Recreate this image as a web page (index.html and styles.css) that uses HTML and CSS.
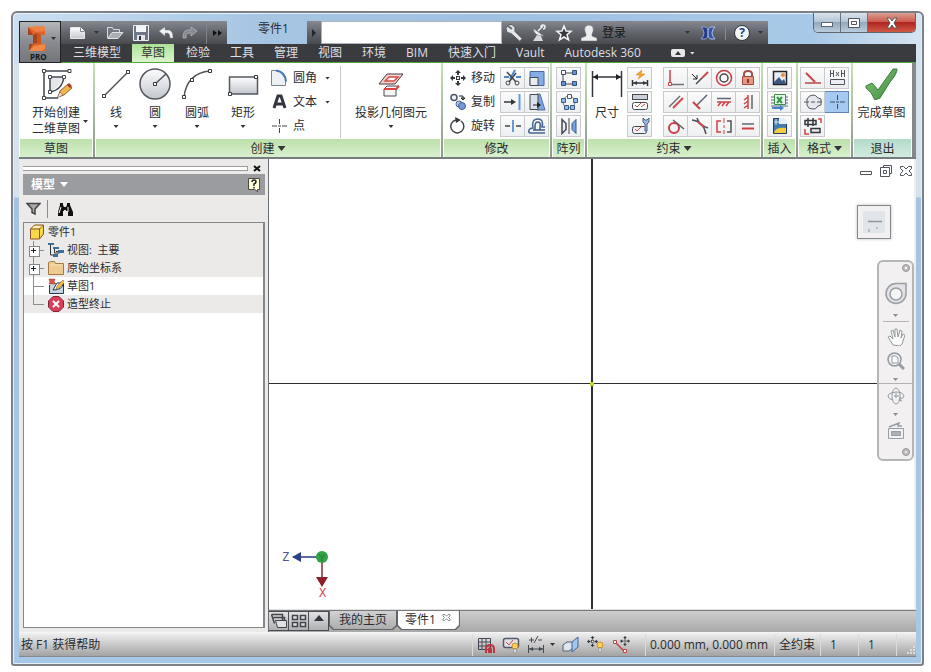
FILE: index.html
```html
<!DOCTYPE html>
<html lang="zh-CN">
<head>
<meta charset="utf-8">
<title>零件1</title>
<link rel="stylesheet" href="styles.css">
</head>
<body>
<svg class="defs" width="0" height="0" aria-hidden="true">
  <defs>
    <linearGradient id="steel" x1="0" y1="0" x2="0" y2="1"><stop offset="0" stop-color="#fdfdfe"/><stop offset="1" stop-color="#c3c7ce"/></linearGradient>
    <linearGradient id="tick" x1="0" y1="0" x2="1" y2="1"><stop offset="0" stop-color="#83c578"/><stop offset="1" stop-color="#3c8b3c"/></linearGradient>
    <symbol id="move" viewBox="0 0 16 16"><path d="M8 0l3 3H5zM8 16l3-3H5zM0 8l3-3v6zM16 8l-3-3v6zM7 3h2v2H7zM7 11h2v2H7zM3 7h2v2H3zM11 7h2v2h-2z" fill="#34363d"/><rect x="6.500" y="6.500" width="3" height="3" fill="#fff" stroke="#34363d"/></symbol>
  </defs>
</svg>
<div class="window">
  <header class="header">
    <button class="app" aria-label="应用程序菜单">
      <svg width="20" height="27" viewBox="0 0 20 27"><path d="M1 2h17v8h-4v9h4v7H2v-7h4v-9H1z" fill="#dd642c"/><path d="M1 2l5 8v9l-4 7v-7h4v-9H1zM6 10l4-2v10l-4 1z" fill="#a8421c"/><path d="M1 2l14-1 3 1v4l-9 1z" fill="#ef8243"/><path d="M10 8l4 2v9l-4-1z" fill="#c75621"/><path d="M2 26l5-5 11-2v5l-3 2z" fill="#f08848"/></svg>
      <i class="caret"></i><span>PRO</span>
    </button>
    <div class="titlebar">
      <nav class="quick">
        <button aria-label="新建"><svg width="18" height="16" viewBox="0 0 18 16"><path d="M1.500 2.500h10l4 4v7h-14z" fill="url(#steel)" stroke="#e6e7ea"/><path d="M11.500 2.500v4h4" fill="#fff" stroke="#81848b"/></svg></button>
        <i class="caret faint"></i>
        <button aria-label="打开"><svg width="18" height="16" viewBox="0 0 18 16"><path d="M1.500 13.500v-11h5l1 2h6v3" fill="#737983" stroke="#d8dbe0"/><path d="M2 13.500l4-6h11l-5 6z" fill="#a9adb5" stroke="#e1e3e7"/></svg></button>
        <button aria-label="保存"><svg width="18" height="18" viewBox="0 0 18 18"><path d="M1.500 1.500h15v15h-15z" fill="#6f7787" stroke="#eff0f2"/><path d="M4 2h10v6H4z" fill="#f4f5f7"/><path d="M5 11h8v6H5z" fill="#e3e5e9"/><path d="M7 12h2v4H7z" fill="#31343b"/></svg></button>
        <button aria-label="放弃"><svg width="16" height="14" viewBox="0 0 16 14"><path d="M1 5l6-4v3h4q4 1 4 8h-3q0-5-3-5H7v3z" fill="#f1f2f4" stroke="#888b92" stroke-width=".5"/></svg></button>
        <button aria-label="重做"><svg width="16" height="14" viewBox="0 0 16 14"><path d="M15 5L9 1v3H5q-4 1-4 8h3q0-5 3-5h2v3z" fill="#85888e" stroke="#b9bbc0" stroke-width=".7"/></svg></button>
        <button class="more" aria-label="更多"><svg width="9" height="6" viewBox="0 0 9 6"><path d="M0 0l4 3-4 3zM5 0l4 3-4 3z" fill="#111"/></svg></button>
      </nav>
      <h1>零件1</h1>
      <button class="expand" aria-label="展开"><svg width="6" height="8" viewBox="0 0 6 8"><path d="M1 0l4 4-4 4z" fill="#24262a"/></svg></button>
      <input class="search" type="text" aria-label="搜索">
      <div class="info">
        <button aria-label="搜索命令"><svg width="18" height="18" viewBox="0 0 18 18"><path d="M3 1l4-.5 3 3v4l7 7-2 3-9-8-4-1-1-4z" fill="#e5e6e9" stroke="#555960"/><path d="M3 2l4 3" stroke="#696d75" stroke-width="2"/></svg></button>
        <button aria-label="通讯中心"><svg width="16" height="18" viewBox="0 0 16 18"><path d="M2 4q1 9 11 8z" fill="#eceded" stroke="#777b82"/><path d="M7 7l5-5M12 5a2 2 0 1 0-2-2" stroke="#f0f1f2" stroke-width="1.500" fill="none"/><path d="M6 11l-4 6h10l-2-5z" fill="#d6d8dc"/></svg></button>
        <button aria-label="收藏夹"><svg width="18" height="18" viewBox="0 0 18 18"><path d="M9 2l2 5 5 .3-4 3.500 1.500 5L9 13l-4.500 2.800 1.500-5-4-3.500 5-.3z" fill="#35383e" stroke="#f3f4f5" stroke-width="1.500"/></svg></button>
        <button class="login"><svg width="16" height="18" viewBox="0 0 16 18"><path d="M5 10q-2-3-1-7 4-4 8 0 1 4-1 7v2l5 2v3H0v-3l5-2z" fill="#ecedef" stroke="#666a71" stroke-width=".5"/></svg>登录</button>
        <i class="caret faint"></i>
        <button class="exchange" aria-label="Exchange"><svg width="16" height="14" viewBox="0 0 16 14"><path d="M1 1h4q3 0 3 6t-3 6H1q3-3 3-6T1 1z" fill="#263a86" stroke="#8fa1d6"/><path d="M15 1h-4Q8 1 8 7t3 6h4q-3-3-3-6t3-6z" fill="#3556a8" stroke="#adbce6"/></svg></button>
        <button class="help" aria-label="帮助"><span>?</span></button>
        <i class="caret faint"></i>
      </div>
      <div class="controls">
        <button aria-label="最小化"><svg width="14" height="12" viewBox="0 0 14 12"><rect x="1.500" y="5.500" width="11" height="4" fill="#fff" stroke="#60656d"/></svg></button>
        <button aria-label="最大化"><svg width="14" height="12" viewBox="0 0 14 12"><path d="M1.500 1.500h11v9h-11z" fill="#fff" stroke="#50555d"/><path d="M4.500 4.500h5v3h-5z" fill="#fff" stroke="#50555d"/></svg></button>
        <button class="close" aria-label="关闭"><svg width="14" height="12" viewBox="0 0 14 12"><path d="M2 1h3l2 3 2-3h3L9 6l3 5H9L7 8l-2 3H2l3-5z" fill="#fff" stroke="#5c5559"/></svg></button>
      </div>
    </div>
    <nav class="tabs">
      <a href="#model">三维模型</a><a href="#sketch" class="active">草图</a><a href="#inspect">检验</a><a href="#tools">工具</a><a href="#manage">管理</a><a href="#view">视图</a><a href="#env">环境</a><a href="#bim">BIM</a><a href="#start">快速入门</a><a href="#vault">Vault</a><a href="#a360">Autodesk 360</a>
      <button class="minimize" aria-label="最小化功能区"><svg width="14" height="8" viewBox="0 0 14 8"><rect width="14" height="8" rx="2" fill="#e7e8ea"/><path d="M4 6l3-4 3 4z" fill="#33353a"/></svg><i class="caret light"></i></button>
    </nav>
  </header>

  <section class="ribbon">
    <div class="panel p-sketch">
      <div class="tools">
        <button class="big start"><svg width="32" height="32" viewBox="0 0 32 32"><path d="M12 10h10q-1 9-12 13V9z" fill="#e4e6e9"/><path d="M4 3h26M4 3v27h14M10 9v15q12-2 14-15z" fill="none" stroke="#43464f" stroke-width="1.500"/><g fill="#fff" stroke="#43464f"><path d="M2.500 1.500h3v3h-3zM28 1.500h3v3h-3zM2.500 28.500h3v3h-3zM8.500 7.500h3v3h-3zM22.500 7.500h3v3h-3zM8.500 22.500h3v3h-3z"/></g><path d="M18 29l2-6 8-7 4 4-8 7z" fill="#f4b44c" stroke="#90602a"/><path d="M27 17l2-2 3 3-2 2z" fill="#a7352c"/><path d="M17 30l3-6 3 3z" fill="#f3dfbd" stroke="#635340" stroke-width=".5"/></svg><span>开始创建<br>二维草图</span><i class="caret"></i></button>
      </div>
      <h2>草图</h2>
    </div>
    <div class="panel p-create">
      <div class="tools">
        <button class="big"><svg width="32" height="32" viewBox="0 0 32 32"><path d="M4 28L28 4" stroke="#50535c" stroke-width="1.500"/><path d="M2.500 26.500h3v3h-3zM26.500 2.500h3v3h-3z" fill="#fff" stroke="#34363d"/></svg><span>线</span><i class="caret"></i></button>
        <button class="big circle"><svg width="32" height="32" viewBox="0 0 32 32"><circle cx="16" cy="16" r="15" fill="url(#steel)" stroke="#555862" stroke-width="1.500"/><path d="M16 16L27 6" stroke="#50535c" stroke-width="1.500"/><path d="M14.500 14.500h3v3h-3z" fill="#fff" stroke="#34363d"/></svg><span>圆</span><i class="caret"></i></button>
        <button class="big arc"><svg width="32" height="32" viewBox="0 0 32 32"><path d="M3 29Q6 5 29 3" fill="none" stroke="#50535c" stroke-width="1.500"/><path d="M1.500 27.500h3v3h-3zM9.500 10.500h3v3h-3zM27.500 1.500h3v3h-3z" fill="#fff" stroke="#34363d"/></svg><span>圆弧</span><i class="caret"></i></button>
        <button class="big rect"><svg width="32" height="32" viewBox="0 0 32 32"><path d="M2.500 9h28v17h-28z" fill="url(#steel)" stroke="#555862" stroke-width="1.500"/><path d="M1.500 24.500h3v3h-3zM27.500 7.500h3v3h-3z" fill="#fff" stroke="#34363d"/></svg><span>矩形</span><i class="caret"></i></button>
        <div class="list">
          <button><svg width="18" height="18" viewBox="0 0 18 18"><path d="M1.500 1.500h6q8 2 8 10v5h-14z" fill="#edf0f4" stroke="#7c8088"/><path d="M6 1.500q9 1 10 11" fill="none" stroke="#4777b5" stroke-width="2"/></svg>圆角<i class="caret"></i></button>
          <button><svg width="18" height="18" viewBox="0 0 18 18"><path d="M4 15L8 3h3l4 12M6 11h7" fill="none" stroke="#34363d" stroke-width="3"/></svg>文本<i class="caret"></i></button>
          <button><svg width="18" height="18" viewBox="0 0 18 18"><path d="M2 9h5M12 9h5M9.500 2v5M9.500 11v5M8 9h3" stroke="#41444c"/></svg>点</button>
        </div>
        <button class="big project"><svg width="28" height="32" viewBox="0 0 28 32"><path d="M2 16L10 6h16l-8 10z" fill="#f5d9d4" stroke="#4c3438"/><path d="M8 13l4-4h9l-4 4z" fill="#fff" stroke="#d14a44" stroke-width="1.500"/><path d="M7 21l3-3h12l-3 4v6H7z" fill="#f5f5f6" stroke="#4a4d55"/><path d="M7 21h12l3-3" fill="none" stroke="#db4540" stroke-width="2"/></svg><span>投影几何图元</span><i class="caret"></i></button>
      </div>
      <h2>创建 <i class="caret large"></i></h2>
    </div>
    <div class="panel p-modify">
      <div class="tools">
        <div class="list">
          <button><svg width="16" height="16"><use href="#move"/></svg>移动</button>
          <button><svg width="16" height="18" viewBox="0 0 16 18"><circle cx="4" cy="4.500" r="3" fill="#f2f5fa" stroke="#4c5667" stroke-width="1.500"/><circle cx="9" cy="11" r="3" fill="#b8cbed" stroke="#466094"/><circle cx="12" cy="13" r="3.500" fill="#7598d8" stroke="#466094"/><path d="M9 3h4v3M11 5h4l-2 2z" fill="none" stroke="#252833"/></svg>复制</button>
          <button><svg width="16" height="18" viewBox="0 0 16 18"><path d="M11 4a6.500 6.500 0 1 1-5-1" fill="none" stroke="#42454e" stroke-width="1.500"/><path d="M5 0l6 3-5 3z" fill="#34363d"/></svg>旋转</button>
        </div>
        <div class="grid g2">
          <button aria-label="修剪"><svg width="20" height="18" viewBox="0 0 20 18"><path d="M1 8h5M13 8h5" stroke="#4d87c7" stroke-width="2"/><path d="M12 1l-5 9" stroke="#518bca" stroke-width="2"/><path d="M4 3l9 10M13 4L6 13" stroke="#41444c" stroke-width="1.500"/><circle cx="14" cy="14" r="2" fill="none" stroke="#41444c"/><circle cx="5" cy="14" r="2" fill="none" stroke="#41444c"/></svg></button>
          <button aria-label="缩放"><svg width="20" height="18" viewBox="0 0 20 18"><path d="M3 2.500h14v14H3z" fill="#83abe4" stroke="#49699e"/><path d="M3 8.500h8v8H3z" fill="#e8ebf0" stroke="#454850"/></svg></button>
          <button aria-label="延伸"><svg width="20" height="18" viewBox="0 0 20 18"><path d="M1 9h8" stroke="#34363d" stroke-width="1.500"/><path d="M8 6l5 3-5 3z" fill="#34363d"/><path d="M16.500 1v16" stroke="#659bd8" stroke-width="2"/></svg></button>
          <button aria-label="拉伸"><svg width="20" height="18" viewBox="0 0 20 18"><path d="M10 1h3l5 16h-8z" fill="#7da4e3" stroke="#536fa0"/><path d="M3 1.500h8v15H3z" fill="#dae1eb" stroke="#454850"/><path d="M6 12h6" stroke="#222"/><path d="M10 9l4 3-4 3z" fill="#222"/></svg></button>
          <button aria-label="分割"><svg width="20" height="18" viewBox="0 0 20 18"><path d="M2 9h5M13 9h5" stroke="#44474e" stroke-width="1.500"/><path d="M10 3v12" stroke="#659bd8" stroke-width="2"/></svg></button>
          <button aria-label="偏移"><svg width="20" height="18" viewBox="0 0 20 18"><path d="M18 16H3q-2-1-1-3 1-2 4-2Q4 2 11 2q6 0 4 8h3" fill="none" stroke="#46648f" stroke-width="1.500"/><path d="M18 13H6M8 13V9q0-4 3-4t2 5v3" fill="none" stroke="#3f5a86" stroke-width="1.500"/></svg></button>
        </div>
      </div>
      <h2>修改</h2>
    </div>
    <div class="panel p-array">
      <div class="tools">
        <div class="grid g1">
          <button aria-label="矩形阵列"><svg width="20" height="18" viewBox="0 0 20 18"><path d="M4 4h12M4 4v11h12" fill="none" stroke="#45484f"/><g stroke="#354d77"><path d="M2.500 1.500h4v4h-4z" fill="#fff"/><path d="M13.500 1.500h4v4h-4zM2.500 12.500h4v4h-4zM13.500 12.500h4v4h-4z" fill="#6695dd"/></g></svg></button>
          <button aria-label="环形阵列"><svg width="20" height="18" viewBox="0 0 20 18"><circle cx="10" cy="9" r="6" fill="none" stroke="#777b82"/><g stroke="#405b82"><path d="M8.500 1.500h4v4h-4z" fill="#fff"/><path d="M2.500 5.500h4v4h-4zM14.500 5.500h4v4h-4zM5.500 12.500h4v4h-4zM11.500 12.500h4v4h-4z" fill="#8dbbed"/></g></svg></button>
          <button aria-label="镜像"><svg width="20" height="18" viewBox="0 0 20 18"><path d="M3 2.500l4 4v6l-4 4z" fill="#eef0f2" stroke="#454850" stroke-width="1.500"/><path d="M17 2.500l-4 4v6l4 4z" fill="#75a1e4" stroke="#3c5a8f"/><path d="M10 1v16" stroke="#44474e"/></svg></button>
        </div>
      </div>
      <h2>阵列</h2>
    </div>
    <div class="panel p-constrain">
      <div class="tools">
        <button class="big dimension"><svg width="32" height="32" viewBox="0 0 32 32"><path d="M1.500 3v26M30.500 3v26M2 9h28" stroke="#34363d" stroke-width="1.500"/><path d="M2 9l5-3v6zM30 9l-5-3v6z" fill="#222"/></svg><span>尺寸</span></button>
        <div class="grid g1">
          <button aria-label="自动尺寸"><svg width="20" height="18" viewBox="0 0 20 18"><path d="M12 1L6 6h4l-2 4 7-5h-4z" fill="#f5a32f" stroke="#d87a18" stroke-width=".5"/><path d="M2.500 11v6M17.500 11v6M3 14h14" stroke="#34363d" stroke-width="1.500"/><path d="M3 14l4-2v4zM17 14l-4-2v4z" fill="#34363d"/></svg></button>
          <button aria-label="显示约束"><svg width="20" height="18" viewBox="0 0 20 18"><rect x="2.500" y="1.500" width="15" height="5" fill="#cbd0d9" stroke="#444851"/><rect x="2.500" y="9.500" width="15" height="7" rx="2" fill="#fff" stroke="#444851"/><path d="M5 12l2 2 4-4M11 14l4-3" stroke="#c94646" fill="none"/></svg></button>
          <button aria-label="约束设置"><svg width="20" height="18" viewBox="0 0 20 18"><rect x="2.500" y="9.500" width="14" height="7" rx="2" fill="#eef1f5" stroke="#444851"/><path d="M5 12l2 2 4-4" stroke="#c94646" fill="none"/><path d="M13 1v4l2 2v7h2V7l2-2V1l-2 2h-2z" fill="#9bb8dd" stroke="#4b6284"/></svg></button>
        </div>
        <div class="grid g4">
          <button aria-label="重合"><svg width="20" height="18" viewBox="0 0 20 18"><path d="M4 1v12" stroke="#cf3f45" stroke-width="1.500"/><path d="M6 15.500h12" stroke="#6c7078" stroke-width="1.500"/><path d="M2.500 13.500h3v3h-3z" fill="#fff" stroke="#cf3f45"/></svg></button>
          <button aria-label="共线"><svg width="20" height="18" viewBox="0 0 20 18"><path d="M6 15l6-6" stroke="#44474e" stroke-width="1.500"/><path d="M12 9l6-6" stroke="#d2494d" stroke-width="2"/><path d="M2 5l5 5M7 6v4H3" stroke="#222" fill="none"/></svg></button>
          <button aria-label="同心"><svg width="20" height="18" viewBox="0 0 20 18"><circle cx="10" cy="9" r="7.500" fill="none" stroke="#cc3b42" stroke-width="1.500"/><circle cx="10" cy="9" r="4" fill="#f8f8f8" stroke="#454850" stroke-width="1.500"/></svg></button>
          <button aria-label="固定"><svg width="20" height="18" viewBox="0 0 20 18"><path d="M6 8V5q0-3 4-3t4 3v3" fill="none" stroke="#a2524b" stroke-width="2"/><path d="M4.500 7.500h11v8h-11z" fill="#e5997f" stroke="#9e4a43"/><path d="M10 10v4" stroke="#893a34" stroke-width="2"/></svg></button>
          <button aria-label="平行"><svg width="20" height="18" viewBox="0 0 20 18"><path d="M3 14L14 3" stroke="#696d75" stroke-width="1.500"/><path d="M7 15L17 5" stroke="#d24a4d" stroke-width="2"/></svg></button>
          <button aria-label="垂直"><svg width="20" height="18" viewBox="0 0 20 18"><path d="M6 13L17 2" stroke="#5b5f67" stroke-width="1.500"/><path d="M3 9l7 7" stroke="#cf3f45" stroke-width="2"/></svg></button>
          <button aria-label="水平"><svg width="20" height="18" viewBox="0 0 20 18"><path d="M3 5.500h14" stroke="#62666e" stroke-width="1.500"/><path d="M3 9h14M7 9l-3 4M11 9l-3 4M15 9l-3 4" stroke="#cf4248" stroke-width="1.500"/></svg></button>
          <button aria-label="竖直"><svg width="20" height="18" viewBox="0 0 20 18"><path d="M14 2v14" stroke="#62666e" stroke-width="1.500"/><path d="M10 2v14M10 4L6 7M10 8l-4 3M10 12l-4 3" stroke="#cf4248" stroke-width="1.500"/></svg></button>
          <button aria-label="相切"><svg width="20" height="18" viewBox="0 0 20 18"><circle cx="8" cy="11" r="5" fill="none" stroke="#cf3f45" stroke-width="2"/><path d="M7 3l11 9" stroke="#5b5f67" stroke-width="1.500"/></svg></button>
          <button aria-label="平滑"><svg width="20" height="18" viewBox="0 0 20 18"><path d="M2 3q11 1 14 14M18 11Q9 8 7 1" fill="none" stroke="#50535b" stroke-width="1.500"/><path d="M8 5l6 5" stroke="#d14a4d" stroke-width="2"/></svg></button>
          <button aria-label="对称"><svg width="20" height="18" viewBox="0 0 20 18"><path d="M7 4H3v11h4" fill="none" stroke="#d14045" stroke-width="1.500"/><path d="M13 4h4v11h-4" fill="none" stroke="#50535b" stroke-width="1.500"/><path d="M10 1v5M10 8v3M10 13v4" stroke="#d14045"/></svg></button>
          <button aria-label="等长"><svg width="20" height="18" viewBox="0 0 20 18"><path d="M4 7h12" stroke="#62666e" stroke-width="1.500"/><path d="M4 11.500h12" stroke="#d14045" stroke-width="2"/></svg></button>
        </div>
      </div>
      <h2>约束 <i class="caret large"></i></h2>
    </div>
    <div class="panel p-insert">
      <div class="tools">
        <div class="grid g1">
          <button aria-label="图像"><svg width="20" height="18" viewBox="0 0 20 18"><path d="M3.500 2.500h13v13h-13z" fill="#e7edf5" stroke="#24262d" stroke-width="1.500"/><path d="M4 13l5-5 3 4 2-2 2 5H4z" fill="#3d587e"/><circle cx="13" cy="6" r="2" fill="#ef8d3d"/></svg></button>
          <button aria-label="导入点"><svg width="20" height="18" viewBox="0 0 20 18"><path d="M1 4h17M1 7h17M1 10h17M1 13h17" stroke="#596984"/><path d="M4.500 1.500h11v10h-11z" fill="#e7f4e8" stroke="#3e9248"/><path d="M7 4l5 6M12 4l-5 6" stroke="#36974a" stroke-width="2"/><path d="M2 14h8v-2l4 3-4 3v-2H2z" fill="#4682ca"/></svg></button>
          <button aria-label="插入文件"><svg width="20" height="18" viewBox="0 0 20 18"><path d="M3.500 1.500h10l3 3v12h-13z" fill="#467bae" stroke="#253c57"/><path d="M4 16q1-6 12-5v5z" fill="#f4cc3d"/><path d="M9 1h5l3 3v3H9z" fill="#e5eef6"/><path d="M4 5h5M6 2v6" stroke="#d9e9f7"/></svg></button>
        </div>
      </div>
      <h2>插入</h2>
    </div>
    <div class="panel p-format">
      <div class="tools">
        <div class="grid g2">
          <button aria-label="构造"><svg width="20" height="18" viewBox="0 0 20 18"><path d="M3 4l9 9" stroke="#d34247" stroke-width="2"/><path d="M2 14h16" stroke="#bd454a" stroke-width="1.500"/></svg></button>
          <button aria-label="联动尺寸"><svg width="20" height="18" viewBox="0 0 20 18"><path d="M3.500 1v7M3.500 4.500h3M6.500 1v7M14.500 1v7M14.500 4.500h3M17.500 1v7M9 3l3 4M12 3L9 7" stroke="#50535b" fill="none"/><path d="M3.500 10.500h14v5h-14z" fill="#eceef1" stroke="#50535b"/></svg></button>
          <button aria-label="中心线"><svg width="20" height="18" viewBox="0 0 20 18"><path d="M4 6q2-4 6-4 3 0 5 3l3 1v6l-3 1q-2 4-6 3-4 0-5-4z" fill="#e4e7eb" stroke="#555962"/><path d="M1 9h5M8 9h4M14 9h5" stroke="#555962"/></svg></button>
          <button aria-label="中心点" class="on"><svg width="20" height="18" viewBox="0 0 20 18"><path d="M3 9h5M13 9h5M10.500 2v5M10.500 11v5M9 9h3" stroke="#40506a"/></svg></button>
          <button aria-label="显示格式"><svg width="20" height="18" viewBox="0 0 20 18"><path d="M2 3.500h11v4H2zM5 1v9M10 1v8" fill="none" stroke="#34363d" stroke-width="1.500"/><path d="M8 11.500h9v4H8z" fill="#e6e9ed" stroke="#34363d" stroke-width="1.500"/><path d="M15 2h3v4M2 12v5h4" fill="none" stroke="#d54348" stroke-width="1.500"/></svg></button>
        </div>
      </div>
      <h2>格式 <i class="caret large"></i></h2>
    </div>
    <div class="panel p-exit">
      <div class="tools">
        <button class="big finish"><svg width="34" height="32" viewBox="0 0 34 32"><path d="M1 18l6-3 6 7L28 1h4q0 5-7 13L15 30l-5 2Q6 23 1 20z" fill="url(#tick)" stroke="#3b7b3b"/></svg><span>完成草图</span></button>
      </div>
      <h2>退出</h2>
    </div>
  </section>

  <main class="main">
    <aside class="browser">
      <div class="grip"><i></i><button aria-label="关闭面板"><svg width="8" height="7" viewBox="0 0 8 7"><path d="M1 1l6 5M7 1L1 6" stroke="#111" stroke-width="2"/></svg></button></div>
      <div class="caption"><strong>模型</strong><i class="caret large"></i><button aria-label="帮助"><svg width="14" height="16" viewBox="0 0 14 16"><path d="M1.500 1.500h11v11h-2v2l-3-2h-6z" fill="#ffffd8" stroke="#494b45"/><path d="M5 5q0-2 2-2t2 2q0 1-2 2v2M7 10v1.500" fill="none" stroke="#222" stroke-width="1.500"/></svg></button></div>
      <div class="filters">
        <button aria-label="过滤器"><svg width="15" height="14" viewBox="0 0 15 14"><path d="M1 1.500h13L9 7v5l-3-1.500V7z" fill="#a8a9ab" stroke="#444" stroke-width="1.500"/></svg></button>
        <button aria-label="查找"><svg width="16" height="14" viewBox="0 0 16 14"><path d="M3 3V1h3v2l1 2h2l1-2V1h3v2l3 7v4h-5V9H9V8H7v1H6v5H1v-4z" fill="#111"/><path d="M4 5l-2 6M11 5v5" stroke="#fff"/></svg></button>
      </div>
      <ul class="tree">
        <li class="root"><svg width="16" height="16" viewBox="0 0 16 16"><path d="M1.500 5l4-4h9v9l-4 5h-9z" fill="#f7d84a" stroke="#8d542c"/><path d="M1.500 5h9v10M10.500 5l4-4" fill="none" stroke="#8d542c"/><path d="M3 4l3-2h7l-3 2z" fill="#fff4c9"/></svg>零件1</li>
        <li><i class="node plus"></i><svg width="16" height="16" viewBox="0 0 16 16"><path d="M2.500 3v10h4M6.500 6v5h5M8 9.500h6" fill="none" stroke="#333"/><path d="M0 1h6v2H0zM5 5h6v2H5zM10 8h6v3h-6zM5 12h5v3H5z" fill="#3d6e9d"/></svg>视图: &nbsp;主要</li>
        <li><i class="node plus"></i><svg width="16" height="16" viewBox="0 0 16 16"><path d="M.500 14.500v-12l2-1h4l1 2h8v11z" fill="#eccb91" stroke="#a87842"/><path d="M1 5h14" stroke="#f9e5be"/></svg>原始坐标系</li>
        <li class="white"><i class="node"></i><svg width="16" height="16" viewBox="0 0 16 16"><path d="M1.500 7v8.500h14V3M5 12l4-7h6q0 7-10 7z" fill="#c9d6e2" stroke="#24384f"/><path d="M1 1h6L6 4l2 2H1l1-2z" fill="#d85540" stroke="#94352e" stroke-width=".5"/><path d="M8 11l1-3 6-6 2 2-6 6z" fill="#f2b840" stroke="#8b6628" stroke-width=".5"/></svg>草图1</li>
        <li><i class="node last"></i><svg width="16" height="16" viewBox="0 0 16 16"><path d="M5 .500h6l4.500 4.500v6L11 15.500H5L.500 11V5z" fill="#dd3e57" stroke="#80283b"/><path d="M5 5l6 6M11 5l-6 6" stroke="#fff" stroke-width="2"/></svg>造型终止</li>
      </ul>
    </aside>
    <div class="document">
      <div class="canvas">
        <i class="axis horizontal"></i><i class="axis vertical"></i><i class="origin"></i>
        <div class="mdi">
          <button aria-label="最小化文档"><svg width="14" height="12" viewBox="0 0 14 12"><path d="M1.500 6.500h11v3h-11z" fill="#fff" stroke="#50555d"/></svg></button>
          <button aria-label="还原文档"><svg width="14" height="12" viewBox="0 0 14 12"><path d="M4.500 2.500v-2h8v8h-2M1.500 2.500h9v9h-9zM4.500 5.500h3v3h-3z" fill="#fff" stroke="#50555d"/></svg></button>
          <button aria-label="关闭文档"><svg width="14" height="12" viewBox="0 0 14 12"><path d="M1.500 1.500h3L7 4l2.500-2.500h3v2L10 6l2.500 2.500v2h-3L7 8l-2.500 2.500h-3v-2L4 6 1.500 3.500z" fill="#fff" stroke="#50555d"/></svg></button>
        </div>
        <button class="cube" aria-label="视图立方体"><svg width="22" height="22" viewBox="0 0 22 22"><path d="M0 0h22v22H0z" fill="#e1e5e9"/><path d="M5 10.500h14" stroke="#9097a0" stroke-width="1.500"/><path d="M6 18v3M14 16v2" stroke="#8f969e"/></svg></button>
        <nav class="navbar">
          <button class="dot" aria-label="关闭导航栏"><svg width="8" height="8" viewBox="0 0 8 8"><circle cx="4" cy="4" r="3.500" fill="#bbb" stroke="#999"/><path d="M3 3l2 2M5 3L3 5" stroke="#fff"/></svg></button>
          <button aria-label="导航控制盘"><svg width="24" height="24" viewBox="0 0 24 24"><path d="M12 1.500h10v10a10 10 0 1 1-10-10z" fill="#e1e3e6" stroke="#9a9da1" stroke-width="1.500"/><circle cx="12" cy="12" r="6" fill="#f5f5f6" stroke="#9a9da1" stroke-width="1.500"/></svg></button>
          <i class="caret"></i><hr>
          <button aria-label="平移"><svg width="18" height="18" viewBox="0 0 18 18"><path d="M6 17L1 9l2-1 3 3-2-8 2-1 2 7V1h2l1 8 2-7 2 1-1 7 2-4 2 1-3 9-2 2z" fill="#fafafa" stroke="#969a9f"/></svg></button>
          <button aria-label="缩放"><svg width="18" height="18" viewBox="0 0 18 18"><path d="M11 11l6 6" stroke="#999ca2" stroke-width="3"/><circle cx="7.500" cy="7.500" r="6.500" fill="#eff0f1" stroke="#969a9f" stroke-width="1.500"/><path d="M5 4h4l2 2v5H5z" fill="#fff" stroke="#969a9f"/></svg></button>
          <i class="caret"></i>
          <button aria-label="动态观察"><svg width="18" height="18" viewBox="0 0 18 18"><ellipse cx="9" cy="9" rx="4" ry="8" fill="none" stroke="#999da2"/><path d="M6 13q-5-1-5-4t8-4q7 0 8 4 0 2-5 4l2-3M12 13l3 1M9 6v5M7 9h5" fill="none" stroke="#969a9f"/></svg></button>
          <i class="caret"></i>
          <button aria-label="正视于"><svg width="18" height="18" viewBox="0 0 18 18"><path d="M2 5l10-4-1 3h4" fill="none" stroke="#999ca2" stroke-width="1.500"/><path d="M1.500 6.500h15v10h-15z" fill="#f3f3f4" stroke="#999ca2"/><path d="M4.500 9.500h9v4h-9z" fill="#aeb2b7" stroke="#989ca1"/></svg></button>
          <button class="dot end" aria-label="导航栏选项"><svg width="8" height="8" viewBox="0 0 8 8"><circle cx="4" cy="4" r="3.500" fill="#bbb" stroke="#999"/><path d="M2.500 3.500h3L4 5.500z" fill="#fff"/></svg></button>
        </nav>
        <svg class="triad" width="48" height="54" viewBox="0 0 48 54"><path d="M11 8h27" stroke="#283a78" stroke-width="1.500"/><path d="M10 8l9-5v10z" fill="#29418d"/><path d="M40 12v18" stroke="#8a2730" stroke-width="1.500"/><path d="M34 28h12l-6 10z" fill="#8d1e27"/><circle cx="40" cy="8" r="6" fill="#31a344"/><path d="M37 5l3 4 3-4M40 9v3" fill="none" stroke="#227c35"/></svg>
        <span class="axis-name z">Z</span><span class="axis-name x">X</span>
      </div>
      <nav class="doctabs">
        <button class="sq" aria-label="层叠"><svg width="18" height="18" viewBox="0 0 18 18"><path d="M1.500 2.500h11v7M3.500 5.500h11v7M1.500 2.500l3 9" fill="none" stroke="#41444a" stroke-width="1.500"/><path d="M5.500 8.500h11v7h-9z" fill="#dfe0e2" stroke="#41444a"/></svg></button>
        <button class="sq" aria-label="平铺"><svg width="18" height="18" viewBox="0 0 18 18"><path d="M2.500 3.500h5v4h-5zM10.500 3.500h5v4h-5zM2.500 10.500h5v4h-5zM10.500 10.500h5v4h-5z" fill="#dfe0e2" stroke="#41444a" stroke-width="1.500"/></svg></button>
        <button class="sq up" aria-label="展开标签"><svg width="10" height="6" viewBox="0 0 10 6"><path d="M0 6l5-6 5 6z" fill="#34363d"/></svg></button>
        <a href="#home" class="home"><span>我的主页</span></a>
        <a href="#part" class="current"><span>零件1 <svg width="9" height="9" viewBox="0 0 14 12"><path d="M1.500 1.500h3L7 4l2.500-2.500h3v2L10 6l2.500 2.500v2h-3L7 8l-2.500 2.500h-3v-2L4 6 1.500 3.500z" fill="#fff" stroke="#50555d"/></svg></span></a>
      </nav>
    </div>
  </main>

  <footer class="status">
    <span class="hint">按 F1 获得帮助</span>
    <div class="toggles">
      <button aria-label="捕捉网格"><svg width="18" height="18" viewBox="0 0 18 18"><path d="M1.500 2.500h12v11h-12zM1 6h13M1 10h13M5 2v12M9 2v12" fill="none" stroke="#454954"/><path d="M9 17v-4q0-4 4-4t4 4v4M12 17v-4q0-1 1-1t1 1v4" fill="none" stroke="#bc3541" stroke-width="2"/></svg></button>
      <button aria-label="显示所有约束"><svg width="18" height="18" viewBox="0 0 18 18"><rect x="1.500" y="2.500" width="15" height="9" rx="2" fill="#e0e3e9" stroke="#525967" stroke-width="1.500"/><path d="M4 6l3 3 4-5" fill="none" stroke="#c9434a"/><circle cx="13" cy="10" r="3" fill="#ffd260" stroke="#d28b29"/><path d="M12 13h2v4h-2z" fill="#fff" stroke="#666" stroke-width=".5"/></svg></button>
      <button aria-label="尺寸显示"><svg width="18" height="18" viewBox="0 0 18 18"><path d="M1.500 9v8M16.500 9v8M2 13h14M2 4h5M4.500 1.500v5M7 7l4-7M11 4h4" stroke="#454954"/><path d="M2 13l4-2v4zM16 13l-4-2v4z" fill="#454954"/></svg><i class="caret"></i></button>
      <button aria-label="切片观察"><svg width="18" height="18" viewBox="0 0 18 18"><path d="M1 15V9l4-3h6v6l-4 3z" fill="#dfe5ed" stroke="#50617b"/><path d="M10 16V6l6-5v10z" fill="#a4c6ee" stroke="#3e6496"/></svg></button>
      <button aria-label="松弛模式"><svg width="18" height="18" viewBox="0 0 18 18"><use href="#move" width="11" height="11"/><circle cx="13" cy="9" r="3" fill="#ffd260" stroke="#d28b29"/><path d="M12 12h2v4h-2z" fill="#fff" stroke="#666" stroke-width=".5"/></svg></button>
      <button aria-label="约束推断"><svg width="18" height="18" viewBox="0 0 18 18"><path d="M3 6l9 9" stroke="#c34249" stroke-width="1.500"/><path d="M1.500 4.500h3v3h-3zM11.500 13.500h3v3h-3z" fill="#fff" stroke="#c34249"/><use href="#move" x="8" width="10" height="10"/></svg></button>
    </div>
    <span class="coords">0.000 mm, 0.000 mm</span><span class="full">全约束</span><span class="count">1</span><span class="count">1</span>
    <span class="resize"><svg width="10" height="10" viewBox="0 0 10 10"><path d="M7 0h2v2H7zM4 3h2v2H4zM7 3h2v2H7zM1 6h2v2H1zM4 6h2v2H4zM7 6h2v2H7z" fill="#dedede"/></svg></span>
  </footer>
</div>
</body>
</html>
```
FILE: styles.css
```css
* { box-sizing: border-box; }

body {
  margin: 0;
  padding: 11px 7px 6px 11px;
  height: 100vh;
  background: #fff;
  color: #2b2c30;
  font: 12px/16px "Open Sans", "Noto Sans CJK SC", sans-serif;
}

button {
  margin: 0;
  padding: 0;
  border: 0;
  background: none;
  color: inherit;
  font: inherit;
}

a { color: inherit; text-decoration: none; }
h1, h2 { margin: 0; font-size: 12px; font-weight: 400; }
svg { display: block; flex: none; }
.defs { position: absolute; }

.caret {
  flex: none;
  width: 5px;
  height: 3px;
  background: #33353a;
  clip-path: polygon(0 0, 100% 0, 50% 100%);
}
.caret.large { display: inline-block; width: 8px; height: 5px; vertical-align: 2px; }
.caret.light { background: #e7e8ea; }

.window {
  display: flex;
  flex-direction: column;
  height: 100%;
  padding: 0 6px 7px;
  border: 2px solid #7d8085;
  border-radius: 6px 6px 3px 3px;
  background: linear-gradient(90deg, #cbdff1, #a6c5e3 28%, #9fc1e2 55%, #a9c9e8 88%, #d5e4f1) 0 0 / 100% 50px no-repeat,
    linear-gradient(#d5e2ee 184px, #a5c3e0 185px, #a8c8e8);
  box-shadow: inset 0 0 0 1px #e5eff8;
}

/* Title bar and ribbon tabs */
.header {
  display: grid;
  grid-template-columns: 42px minmax(0, 1fr);
  grid-template-rows: 31px 19px;
  flex: none;
}
.app {
  z-index: 1;
  grid-row: 1 / 3;
  grid-column: 1;
  display: flex;
  flex-wrap: wrap;
  align-items: center;
  align-content: flex-start;
  gap: 0 4px;
  margin-top: 8px;
  padding: 3px 2px 0 7px;
  border: 1px solid #222326;
  background: linear-gradient(#b4b6ba, #898b90 50%, #74767b);
}
.app span {
  width: 100%;
  padding-left: 3px;
  color: #17181a;
  font: 700 8px/9px "Open Sans", sans-serif;
  text-align: left;
}
.titlebar { display: flex; align-items: flex-start; grid-column: 2; grid-row: 1; }
.titlebar > * { flex: none; }
.quick, .info, .expand {
  display: flex;
  align-items: center;
  height: 23px;
  margin-top: 8px;
  background: linear-gradient(#85888e, #62656b 50%, #494b50);
}
.quick { width: 166px; padding-left: 8px; gap: 8px; }
.quick .caret { margin: 0 -1px; }
.quick .more { align-self: stretch; flex: 1; border-left: 1px solid #7e8187; display: flex; align-items: center; justify-content: center; }
.titlebar h1 { width: 80px; padding: 8px 0 0 13px; text-align: center; }
.expand { width: 14px; justify-content: center; }
.titlebar .search {
  flex: 1;
  min-width: 60px;
  height: 23px;
  margin: 8px 0 0;
  padding: 0 4px;
  border: 1px solid #aeb4bb;
  background: #fff;
}
.info { width: 266px; padding: 0 5px 0 3px; gap: 8px; }
.info .login { display: flex; align-items: center; gap: 5px; color: #15161a; white-space: nowrap; }
.info .login + .caret { margin-left: auto; }
.info .exchange { margin-left: 2px; padding-right: 9px; border-right: 1px solid #85888e; }
.help span {
  display: block;
  width: 16px;
  border: 1px solid #30343c;
  border-radius: 50%;
  background: #f3f5f9;
  color: #273f91;
  font-weight: 700;
  line-height: 14px;
}
.controls { display: flex; height: 20px; margin-left: 45px; border: 1px solid #61666d; border-top: 0; border-radius: 0 0 5px 5px; overflow: hidden; }
.controls button { display: flex; align-items: center; justify-content: center; width: 27px; border-right: 1px solid #6c737b; background: linear-gradient(#d8e3ed, #b2c3d3 50%, #93a9bd 50%, #b9cddd); }
.controls .close { width: 47px; border: 0; background: linear-gradient(#dca094, #cb5449 50%, #b02522 50%, #cf5a46); }

.tabs {
  grid-column: 1 / 3;
  grid-row: 2;
  display: flex;
  padding-left: 44px;
  border-bottom: 1px solid #59a43c;
  background: #3a3b3f;
  color: #dedfe1;
}
.tabs a { padding: 0 10px; line-height: 17px; white-space: nowrap; }
.tabs .active { padding: 0 9px; margin: 0 2px 0 1px; background: linear-gradient(#ace298, #d9f4cd); color: #333; }
.minimize { display: flex; align-items: center; gap: 5px; margin-left: 20px; }

/* Ribbon */
.ribbon { display: flex; flex: none; height: 96px; border-bottom: 2px solid #787b80; background: #fff; }
.panel { display: flex; flex-direction: column; flex: none; border: solid #8f968d; border-width: 0 2px 0 0; border-image: linear-gradient(#c5e5b7, #8f968d) 1; }
.panel h2 {
  flex: none;
  height: 18px;
  margin: 0 1px;
  background: linear-gradient(#bce0ac, #d9f0cd);
  line-height: 19px;
  text-align: center;
}
.tools { display: flex; flex: 1; min-height: 0; align-items: flex-start; padding-top: 3px; }
.p-sketch { width: 76px; }
.p-create { flex: 1 0 348px; }
.p-modify { width: 109px; }
.p-array { width: 35px; }
.p-constrain { width: 176px; }
.p-insert { width: 35px; }
.p-format { width: 55px; }
.panel.p-exit { width: 63px; border-right: 4px solid #85898c; border-image: none; }
.p-exit h2 { background: linear-gradient(#b3dac9, #d1ebe0); }

.big { display: flex; flex-direction: column; align-items: center; width: 42px; padding-top: 2px; white-space: nowrap; }
.big span { margin: 5px 0 4px; }
.start { position: relative; width: 74px; }
.start .caret { position: absolute; right: 5px; bottom: 18px; }
.circle { width: 36px; }
.arc { width: 48px; }
.rect { width: 44px; }
.dimension { width: 32px; }
.p-create .list { margin-left: 5px; }
.project { flex: 1; margin-left: 7px; height: 72px; border-left: 1px solid #c5c7ca; }
.finish { width: 57px; }
.list { display: grid; grid-auto-rows: 24px; }
.list button { display: flex; align-items: center; gap: 5px; white-space: nowrap; }
.list .caret { margin: 0 3px; }
.p-modify .list { margin: 0 5px 0 7px; }

.grid { display: grid; grid-auto-rows: 22px; gap: 2px 0; margin-top: 1px; }
.g1 { grid-template-columns: 25px; margin-left: 4px; }
.g2 { grid-template-columns: 25px 24px; }
.g4 { grid-template-columns: 25px 24px 24px 24px; margin-left: 11px; }
.p-format .g2 { margin-left: 2px; }
.p-constrain .big { margin-left: 4px; }
.grid button {
  display: flex;
  align-items: center;
  justify-content: center;
  border: 1px solid #c8cacd;
  background: linear-gradient(#fbfbfb, #eeeff0);
}
.g2 button:nth-child(even), .g4 button:not(:nth-child(4n + 1)) { border-left: 0; }
.grid .on { border: 1px solid #6287b5; background: #a5c9f0; }

/* Model browser */
.main { display: flex; flex: 1; min-height: 0; background: #ebeae9; }
.browser { display: flex; flex-direction: column; width: 249px; padding: 3px 3px 4px 4px; flex: none; }
.grip { display: flex; align-items: center; gap: 5px; height: 12px; }
.grip i { flex: 1; height: 5px; border: 1px solid #9c9da0; border-left: 0; background: #fff; }
.grip button { width: 12px; }
.caption { display: flex; align-items: center; gap: 5px; height: 21px; padding: 0 4px 0 8px; background: #9b9c9f; color: #fff; }
.caption .caret { background: #fff; }
.caption button { margin-left: auto; }
.filters { display: flex; align-items: center; height: 27px; padding-left: 3px; }
.filters button:first-child { padding: 2px 6px 2px 0; margin-right: 9px; border-right: 1px solid #888b91; }
.tree {
  flex: 1;
  margin: 0;
  padding: 0;
  border: 1px solid #85878a;
  border-right-width: 2px;
  background: #fff;
  font-size: 11px;
  list-style: none;
}
.tree li { display: flex; align-items: center; gap: 3px; height: 18px; padding-left: 5px; background: #ebeae9; }
.tree .white { background: #fff; }
.node {
  align-self: stretch;
  width: 15px;
  margin-right: 1px;
  background: linear-gradient(#8b8d91, #8b8d91) 4px 0 / 1px 100% no-repeat,
    linear-gradient(#8b8d91, #8b8d91) 4px 9px / 11px 1px no-repeat;
}
.node.last { background-size: 1px 10px, 11px 1px; }
.plus::before {
  display: block;
  width: 9px;
  height: 9px;
  margin-top: 5px;
  border: 1px solid #85878b;
  background: linear-gradient(#222, #222) 1px 3px / 5px 1px no-repeat,
    linear-gradient(#222, #222) 3px 1px / 1px 5px no-repeat, #fff;
  content: "";
}

/* Drawing area */
.document { display: flex; flex-direction: column; flex: 1; min-width: 0; border-left: 1px solid #696c70; }
.canvas { position: relative; flex: 1; border-right: 2px solid #eee; border-bottom: 1px solid #e2e2e2; background: #fff; }
.axis { position: absolute; background: #2d2e31; }
.horizontal { top: calc(50% - 1px); left: 0; width: 100%; height: 1px; }
.vertical { top: 0; left: calc(50% - 1px); width: 2px; height: 100%; }
.origin { position: absolute; top: calc(50% - 2px); left: calc(50% - 2px); width: 4px; height: 4px; background: #c9d52a; }
.mdi { position: absolute; top: 6px; right: 1px; display: flex; gap: 6px; }
.cube { position: absolute; top: 46px; right: 23px; padding: 5px; border: 1px solid #85888c; background: #f2f0f0; box-shadow: 0 0 3px #bbb; }
.navbar {
  position: absolute;
  top: 101px;
  right: 0;
  display: flex;
  flex-direction: column;
  align-items: center;
  width: 37px;
  height: 201px;
  padding: 2px;
  border: 2px solid #b5b6b8;
  border-radius: 6px;
  background: rgb(236 233 235 / 70%);
}
.navbar .dot { align-self: flex-end; margin-bottom: 10px; }
.navbar .dot.end { margin: auto 0 1px; }
.navbar hr { width: 26px; margin: 4px 0 6px; border: 0; border-top: 1px solid #b5b6b8; }
.navbar .caret { margin: 8px 0 0; background: #888c92; }
.navbar hr + button { margin-bottom: 6px; }
.navbar .caret + button { margin-top: 6px; }
.triad { position: absolute; bottom: 6px; left: 13px; }
.axis-name { position: absolute; font: 12px/12px "DejaVu Sans Mono", monospace; }
.z { bottom: 46px; left: 13px; color: #4a5699; }
.x { bottom: 10px; left: 50px; color: #da4658; }

.doctabs { display: flex; flex: none; height: 22px; border-top: 1px solid #77797d; background: linear-gradient(#cdcdcd, #a9a9a9); }
.sq { display: flex; align-items: center; justify-content: center; width: 20px; height: 20px; border: 1px solid #4a4c51; border-left: 0; background: linear-gradient(#e2e2e3, #aeb0b2); }
.sq.up { padding-bottom: 6px; }
.doctabs a { height: 19px; padding: 0 1px 1px; background: #606368; clip-path: polygon(0 0, 100% 0, 100% 80%, calc(100% - 4px) 100%, 4px 100%, 0 80%); }
.doctabs a span { display: flex; gap: 6px; height: 18px; padding: 0 9px; background: linear-gradient(#d2d2d2, #adadad); line-height: 18px; clip-path: polygon(0 0, 100% 0, 100% 78%, calc(100% - 4px) 100%, 4px 100%, 0 78%); white-space: nowrap; }
.doctabs .current span { padding: 0 8px 0 7px; background: #fff; }
.doctabs .current svg { margin-top: 2px; }

/* Status bar */
.status { display: flex; align-items: center; flex: none; height: 25px; border-top: 1px solid #f5f5f5; border-bottom: 1px solid #85888c; background: linear-gradient(#f0f0f0, #c9c9c9 50%, #a3a3a3); }
.hint { flex: 1; padding-left: 2px; }
.status > :not(.hint) { display: flex; align-items: center; height: 22px; padding-left: 4px; border-left: 1px solid #dadada; white-space: nowrap; }
.toggles { gap: 7px; width: 173px; }
.toggles button { display: flex; align-items: center; gap: 5px; }
.coords { width: 129px; }
.full { width: 46px; }
.status .count { width: 38px; padding-left: 9px; }
.status .resize { align-items: flex-end; justify-content: flex-end; width: 20px; }
```
